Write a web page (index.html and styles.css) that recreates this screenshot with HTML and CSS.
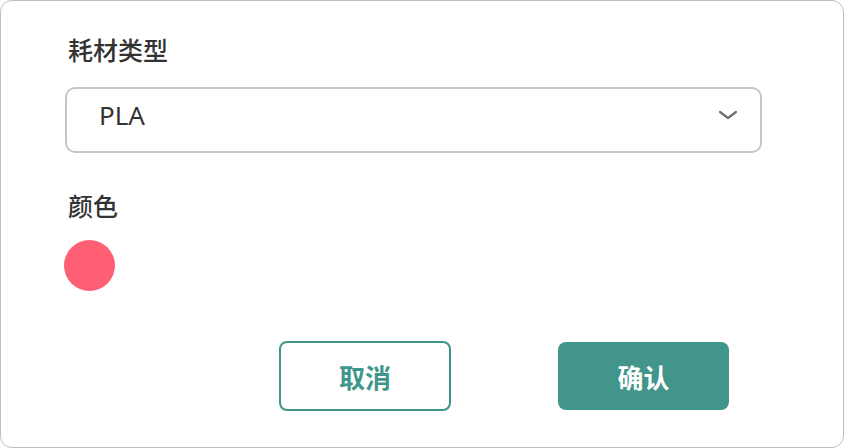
FILE: index.html
```html
<!DOCTYPE html>
<html lang="zh">
<head>
    <meta charset="utf-8">
    <title>耗材</title>
    <link rel="stylesheet" href="styles.css">
</head>
<body>
  <div class="dialog">
    <div class="field_label">耗材类型</div>
    <div class="select_box">
        <span class="select_value">PLA</span>
        <svg class="chevron" width="20" height="10" viewBox="0 0 20 10">
            <path d="M2 2 L10 8 L18 2" fill="none" stroke="#707070" stroke-width="2.2" stroke-linecap="round" stroke-linejoin="round"/>
        </svg>
    </div>
    <div class="field_label color_label">颜色</div>
    <div class="swatch"></div>
    <div class="btn_row">
        <button class="btn btn_cancel">取消</button>
        <button class="btn btn_ok">确认</button>
    </div>
  </div>
</body>
</html>
```

FILE: styles.css
```css
*{
    margin: 0;
    box-sizing: border-box;
}
body{
    background-color: #ffffff;
    font-family: "Noto Sans CJK SC", "Noto Sans", sans-serif;
    color: #333333;
}
.dialog{
    width: 844px;
    height: 448px;
    border: 1px solid #bfbfbf;
    border-radius: 12px;
    padding: 30px 0 0 64px;
    background: #fff;
}
.field_label{
    font-size: 25px;
    font-weight: 500;
    line-height: 36px;
    padding-left: 3px;
}
.select_box{
    margin-top: 20px;
    width: 697px;
    height: 66px;
    border: 2px solid #c6c6c6;
    border-radius: 10px;
    display: flex;
    align-items: center;
    justify-content: space-between;
    padding: 0 22px 0 32px;
}
.select_value{
    font-family: "Noto Sans", sans-serif;
    font-size: 26px;
    margin-bottom: 10px;
}
.chevron{
    margin-top: -11px;
}
.color_label{
    margin-top: 34px;
}
.swatch{
    margin-top: 17px;
    margin-left: -1px;
    width: 51px;
    height: 51px;
    border-radius: 50%;
    background-color: #fe5f75;
}
.btn_row{
    display: flex;
    gap: 107px;
    padding-left: 214px;
    margin-top: 50px;
    align-items: center;
}
.btn{
    width: 172px;
    height: 70px;
    border-radius: 8px;
    font-family: "Noto Sans CJK SC", sans-serif;
    font-size: 26px;
    font-weight: 700;
}
.btn_cancel{
    background: #fff;
    border: 2px solid #40968a;
    color: #40968a;
}
.btn_ok{
    height: 68px;
    width: 171px;
    background: #42958a;
    border: none;
    color: #fff;
}
```
